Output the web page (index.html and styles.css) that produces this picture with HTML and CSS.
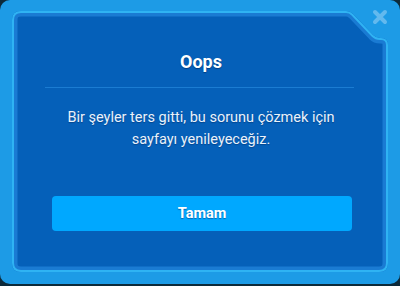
FILE: index.html
```html
<!DOCTYPE html>
<html>
<head>
<meta charset="utf-8">
<link rel="stylesheet" href="styles.css">
</head>
<body>
<div class="frame">
  <div class="panel">
    <svg class="panel-bg" width="376" height="261" viewBox="0 0 376 261">
      <defs>
        <clipPath id="pc"><path d="M9,0 H334 Q338,0 341,3 L361,24 Q364,27 368,27 H369 Q376,27 376,34 V252 Q376,261 367,261 H9 Q0,261 0,252 V9 Q0,0 9,0 Z"/></clipPath>
      </defs>
      <path d="M9,0 H334 Q338,0 341,3 L361,24 Q364,27 368,27 H369 Q376,27 376,34 V252 Q376,261 367,261 H9 Q0,261 0,252 V9 Q0,0 9,0 Z" fill="#0560b9"/>
      <g clip-path="url(#pc)" fill="none">
        <path d="M9,0 H334 Q338,0 341,3 L361,24 Q364,27 368,27 H369 Q376,27 376,34 V252 Q376,261 367,261 H9 Q0,261 0,252 V9 Q0,0 9,0 Z" stroke="#1a7bd3" stroke-width="11"/>
        <path d="M9,0 H334 Q338,0 341,3 L361,24 Q364,27 368,27 H369 Q376,27 376,34 V252 Q376,261 367,261 H9 Q0,261 0,252 V9 Q0,0 9,0 Z" stroke="#2fb3f3" stroke-width="4"/>
      </g>
    </svg>
    <div class="content">
      <h1 class="title">Oops</h1>
      <div class="divider"></div>
      <p class="message">Bir şeyler ters gitti, bu sorunu çözmek için<br>sayfayı yenileyeceğiz.</p>
      <button class="ok">Tamam</button>
    </div>
  </div>
  <svg class="close" width="16" height="16" viewBox="0 0 16 16">
    <path d="M3,3 L13,13 M13,3 L3,13" stroke="#62b9ee" stroke-width="4" stroke-linecap="round"/>
  </svg>
</div>
</body>
</html>
```
FILE: styles.css
```css
html, body {
  margin: 0;
  padding: 0;
}
body {
  width: 400px;
  height: 286px;
  background: #0d2a3a;
  font-family: Roboto, "Noto Sans", sans-serif;
}
.frame {
  position: relative;
  width: 400px;
  height: 284px;
  box-sizing: border-box;
  padding: 11px 12px 12px 12px;
  background: #1d9be6;
  border-radius: 10px;
}
.panel {
  position: relative;
  width: 376px;
  height: 261px;
}
.panel-bg {
  position: absolute;
  left: 0;
  top: 0;
  display: block;
}
.content {
  position: relative;
  display: flex;
  flex-direction: column;
  padding: 0 32px 0 34px;
  text-align: center;
  color: #fff;
}
.title {
  margin: 41px 0 0 0;
  font-size: 18px;
  line-height: 20px;
  font-weight: 700;
  text-shadow: 0 1px 1px rgba(0, 30, 80, 0.5);
}
.divider {
  margin: 15px 2px 0 -1px;
  height: 1px;
  background: #1b7cd2;
}
.message {
  margin: 19px 0 0 0;
  font-size: 14.5px;
  line-height: 22px;
  color: #eaf2fb;
  text-shadow: 0 1px 1px rgba(0, 30, 80, 0.4);
}
.ok {
  margin: 45px 4px 0 6px;
  height: 35px;
  border: none;
  border-radius: 4px;
  background: #00a8ff;
  color: #fff;
  font-family: Roboto, "Noto Sans", sans-serif;
  font-size: 14.5px;
  font-weight: 700;
  text-shadow: 0 1px 1px rgba(0, 40, 100, 0.5);
  padding: 0;
}
.close {
  position: absolute;
  left: 372px;
  top: 9px;
}
```
